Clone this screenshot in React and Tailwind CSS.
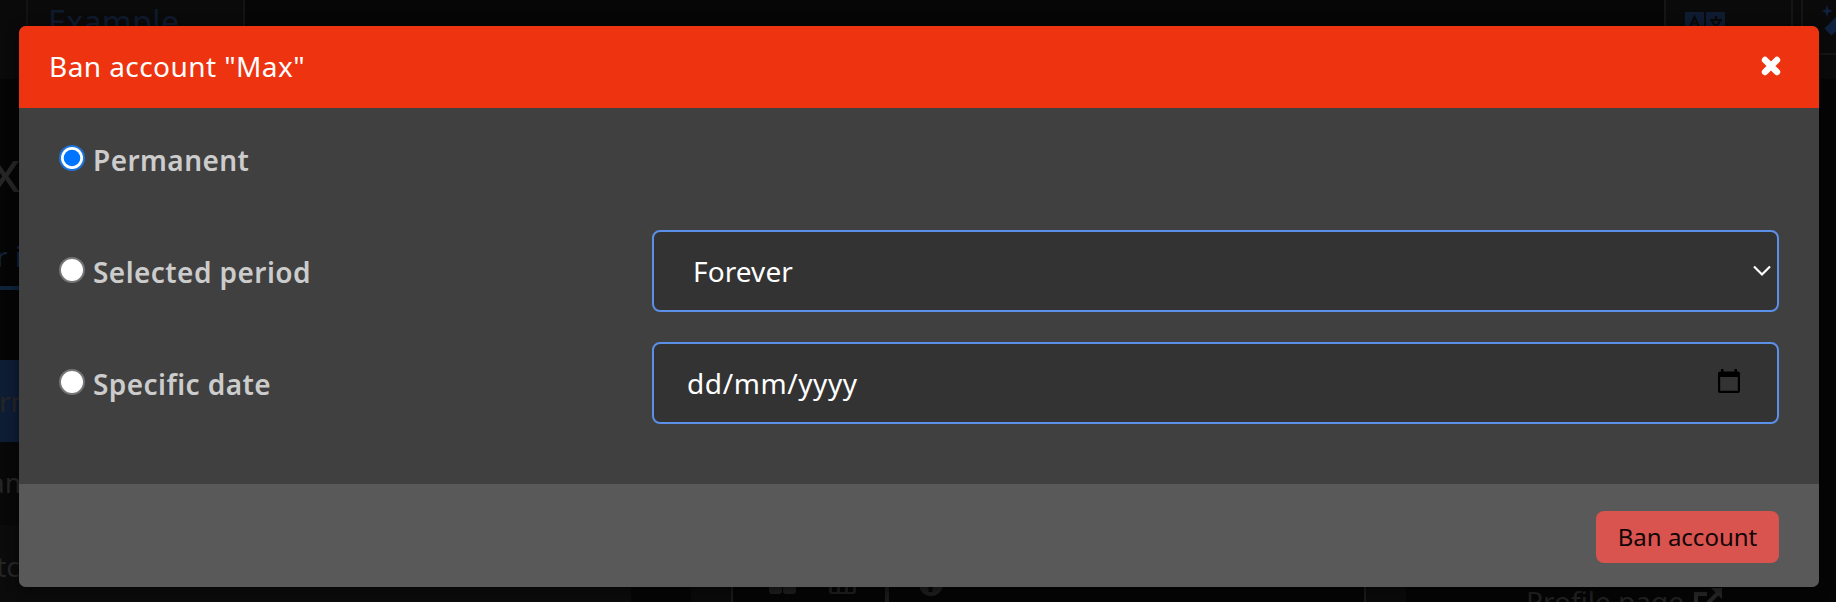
import React from "react";

function Radio({ checked }) {
  return checked ? (
    <svg width="26" height="26" viewBox="0 0 26 26" className="mb-0.5 shrink-0">
      <circle cx="13" cy="13" r="13" fill="#1a74e0" />
      <circle cx="13" cy="13" r="11" fill="#fff" />
      <circle cx="13" cy="13" r="8.300" fill="#0075ff" />
    </svg>
  ) : (
    <span className="mb-0.5 size-[26px] shrink-0 rounded-full border-2 border-[#767676] bg-white" />
  );
}

function Row({ label, checked, children }) {
  return (
    <div className="flex h-[82px]">
      <label className="flex w-[593px] items-center gap-2">
        <Radio checked={checked} />
        <span className="pt-0.5 text-[28px] leading-[38px] font-semibold tracking-[0.43px] whitespace-nowrap text-[#cccccc]">{label}</span>
      </label>
      {children}
    </div>
  );
}

function CloseIcon() {
  return (
    <svg width="20" height="20" viewBox="0 0 20 20" className="mr-[38px]">
      <path d="M4 4L16 16M16 4L4 16" stroke="#fff" strokeWidth="6.400" strokeLinecap="round" />
    </svg>
  );
}

function Backdrop() {
  return (
    <div className="flex h-[602px] w-full flex-col overflow-hidden bg-[#050505] text-[#252525]">
      <div className="flex h-[79px] shrink-0 bg-[#0a0a0a]">
        <div className="ml-[26px] flex w-[219px] shrink-0 border-x-2 border-[#131313] pl-5 text-[32px] leading-[44px] tracking-[0.4px] text-[#0f1a2e]">
          Example
        </div>
        <div className="h-[79px] w-[1419px] shrink-0 bg-[#060606]" />
        <div className="flex h-[55px] w-[129px] shrink-0 border-x-2 border-b-2 border-[#151515] pt-3 pl-[19px]">
          <svg width="40" height="28" viewBox="0 0 40 28">
            <path d="M0 1a1 1 0 0 1 1-1h18v28H0zM21 0h18a1 1 0 0 1 1 1v27H21z" fill="#0f1b31" />
            <path d="M5 15L9.500 5L14 15M6.500 11.500H12.500M25 8H37M31 4V8M27 9C28 12 32 15.500 36 15.500M35 9C34 12 30 15.500 26 15.500" fill="none" stroke="#090909" strokeWidth="2.200" />
          </svg>
        </div>
        <div className="ml-2 h-[55px] w-[35px] shrink-0 overflow-hidden border-b-2 border-l-2 border-[#151515] pt-1 pl-[19px]">
          <svg width="24" height="36" viewBox="0 0 24 36">
            <path d="M5 1L6.500 5.500L11 7L6.500 8.500L5 13L3.500 8.500L-1 7L3.500 5.500Z" fill="#10213f" />
            <path d="M6 28L22 12" stroke="#10213f" strokeWidth="10" />
          </svg>
        </div>
      </div>
      <div className="flex h-[143px] shrink-0 items-start pt-[61px]">
        <span className="-ml-2.5 text-[58px] leading-[60px]">x</span>
      </div>
      <div className="flex h-[68px] w-[60px] shrink-0 border-b-4 border-[#10233b] pt-[13px] text-[28px] text-[#10233b]">
        <span className="-ml-[4px] whitespace-nowrap">r i</span>
      </div>
      <div className="mt-[70px] flex h-[82px] w-[300px] shrink-0 items-center bg-[#0e1c34] text-[28px]">
        <span className="-ml-px">rm</span>
      </div>
      <div className="flex h-[83px] w-[300px] shrink-0 items-center bg-[#080808] pb-1 text-[28px]">
        <span className="-ml-[11px]">am</span>
      </div>
      <div className="flex h-[77px] shrink-0 overflow-hidden">
        <div className="w-[631px] bg-[#0b0b0b] pt-5 text-[28px]">
          <span className="-ml-[11px]">itch</span>
        </div>
        <div className="ml-[60px] flex w-[42px] border-r-2 border-[#1a1a1a] bg-[#0a0a0a]" />
        <div className="flex w-[156px] items-start border-r-4 border-[#1a1a1a] pt-11 pl-9">
          <svg width="90" height="26" viewBox="0 0 90 26">
            <g fill="#1d1d1d">
              <rect x="0" y="13" width="13" height="12" rx="3" />
              <rect x="14" y="13" width="13" height="12" rx="3" />
              <path fillRule="evenodd" d="M60 8H87V22Q87 25 84 25H63Q60 25 60 22ZM63 18V23H68V18ZM71 18V23H76V18ZM79 18V23H84V18Z" />
            </g>
          </svg>
        </div>
        <div className="flex w-[475px] pt-[47px] pl-[29px]">
          <svg width="26" height="26" viewBox="0 0 26 26">
            <circle cx="13" cy="12" r="12" fill="#1d1d1d" />
            <rect x="10.500" y="15" width="4" height="5" fill="#070707" />
          </svg>
        </div>
        <div className="w-[42px] border-l-2 border-[#1a1a1a] bg-[#0a0a0a]" />
        <div className="flex gap-2.5 pt-[54px] pl-[120px] text-[28px] leading-[44px] text-[#202020]">
          <span className="whitespace-nowrap">Profile page</span>
          <svg width="30" height="30" viewBox="0 0 30 30" className="mt-2">
            <path d="M13 7H2V28H25V18M10 20L24 6" fill="none" stroke="#252525" strokeWidth="4" />
            <path d="M17 1H28V12Z" fill="#252525" />
          </svg>
        </div>
      </div>
    </div>
  );
}

export default function App() {
  return (
    <div className="relative h-[602px] w-[1836px] overflow-hidden font-['Noto_Sans',sans-serif]">
      <Backdrop />
      <div className="absolute inset-0 flex items-start pt-[26px] pl-[19px]">
        <div className="flex h-[561px] w-[1800px] flex-col overflow-hidden rounded-[7px] bg-[#404040] shadow-[0_2px_12px_rgba(0,0,0,0.5)]">
          <header className="flex h-[82px] items-center justify-between bg-[#ee3311] pb-0.5 pl-[30px]">
            <h1 className="text-[28px] leading-[38px] tracking-[0.43px] text-white">Ban account "Max"</h1>
            <CloseIcon />
          </header>
          <div className="flex h-[376px] flex-col gap-[30px] px-10 pt-2.5">
            <Row label="Permanent" checked />
            <Row label="Selected period">
              <div className="flex h-[82px] w-[1127px] items-center justify-between rounded-lg border-2 border-[#5b8fe8] bg-[#333333] pr-1.5 pl-[39px] text-[28px] text-white">
                <span className="tracking-[0.1px]">Forever</span>
                <svg width="18" height="12" viewBox="0 0 18 12">
                  <path d="M1 1.500L9 9.500L17 1.500" fill="none" stroke="#fff" strokeWidth="2.200" />
                </svg>
              </div>
            </Row>
            <Row label="Specific date">
              <div className="flex h-[82px] w-[1127px] items-center justify-between rounded-lg border-2 border-[#5b8fe8] bg-[#333333] pr-[37px] pl-[33px] text-[28px] text-white">
                <span className="tracking-[0.6px]">dd/mm/yyyy</span>
                <svg width="22" height="24" viewBox="0 0 22 24" className="mb-1">
                  <path fillRule="evenodd" d="M3 0H5.500V2.500H16.500V0H19V2.500H20Q22 2.500 22 4.500V22Q22 24 20 24H2Q0 24 0 22V4.500Q0 2.500 2 2.500H3ZM2.200 8V21.800H19.800V8Z" fill="#000" />
                </svg>
              </div>
            </Row>
          </div>
          <footer className="flex h-[103px] items-start justify-end bg-[#595959] pt-[27px] pr-10">
            <button className="h-[52px] w-[183px] rounded-lg bg-[#d9534f] text-2xl text-[#120505]">Ban account</button>
          </footer>
        </div>
      </div>
    </div>
  );
}
